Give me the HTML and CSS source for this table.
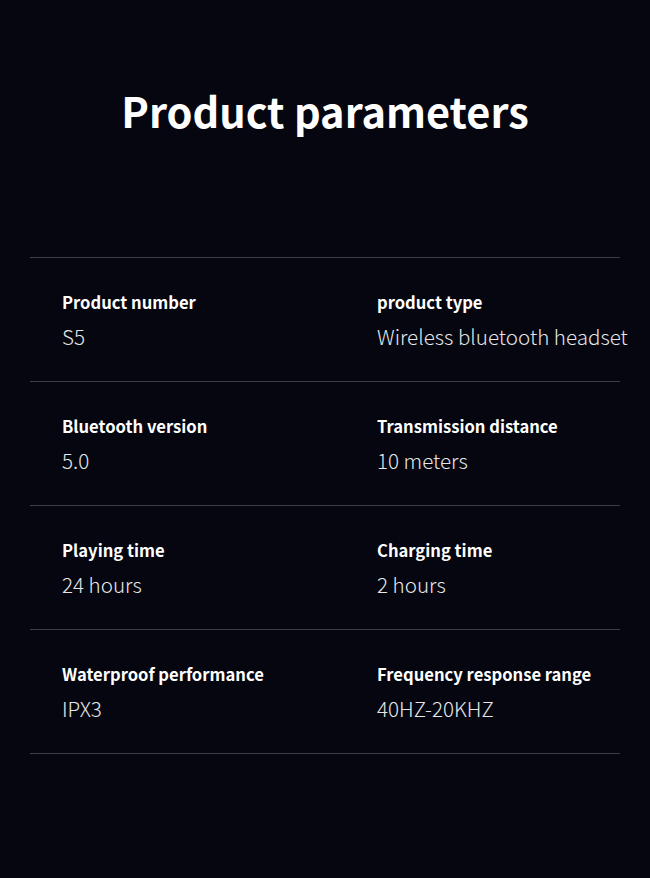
FILE: index.html
```html
<!DOCTYPE html>
<html lang="en">
<head>
<meta charset="utf-8">
<title>Product parameters</title>
<link rel="stylesheet" href="styles.css">
</head>
<body>
<main class="page">
  <h1 class="title">Product parameters</h1>
  <section class="table">
    <div class="row">
      <div class="cell"><div class="label">Product number</div><div class="value">S5</div></div>
      <div class="cell"><div class="label">product type</div><div class="value">Wireless bluetooth headset</div></div>
    </div>
    <div class="row">
      <div class="cell"><div class="label">Bluetooth version</div><div class="value">5.0</div></div>
      <div class="cell"><div class="label">Transmission distance</div><div class="value">10 meters</div></div>
    </div>
    <div class="row">
      <div class="cell"><div class="label">Playing time</div><div class="value">24 hours</div></div>
      <div class="cell"><div class="label">Charging time</div><div class="value">2 hours</div></div>
    </div>
    <div class="row">
      <div class="cell"><div class="label">Waterproof performance</div><div class="value">IPX3</div></div>
      <div class="cell"><div class="label">Frequency response range</div><div class="value">40HZ-20KHZ</div></div>
    </div>
  </section>
</main>
</body>
</html>
```
FILE: styles.css
```css
html, body {
  margin: 0;
  padding: 0;
  background: #05060f;
}
body {
  font-family: "Noto Sans CJK SC", "Noto Sans", sans-serif;
  color: #ffffff;
  width: 650px;
  height: 878px;
  overflow: hidden;
}
.page {
  padding: 0 30px;
}
.title {
  margin: 0;
  height: 257px;
  box-sizing: border-box;
  padding-top: 82px;
  font-size: 41.5px;
  line-height: 56px;
  font-weight: 700;
  text-align: center;
  letter-spacing: 0;
}
.table {
  border-bottom: 1px solid #3d3e48;
}
.row {
  display: grid;
  grid-template-columns: 315px 1fr;
  height: 124px;
  box-sizing: border-box;
  border-top: 1px solid #3d3e48;
}
.cell {
  padding: 32px 0 0 32px;
}
.label {
  font-size: 16.6px;
  line-height: 24px;
  font-weight: 700;
  color: #ffffff;
  white-space: nowrap;
}
.value {
  margin-top: 8px;
  font-size: 20.6px;
  line-height: 28px;
  font-weight: 300;
  color: #e6e6e8;
  white-space: nowrap;
}
```
